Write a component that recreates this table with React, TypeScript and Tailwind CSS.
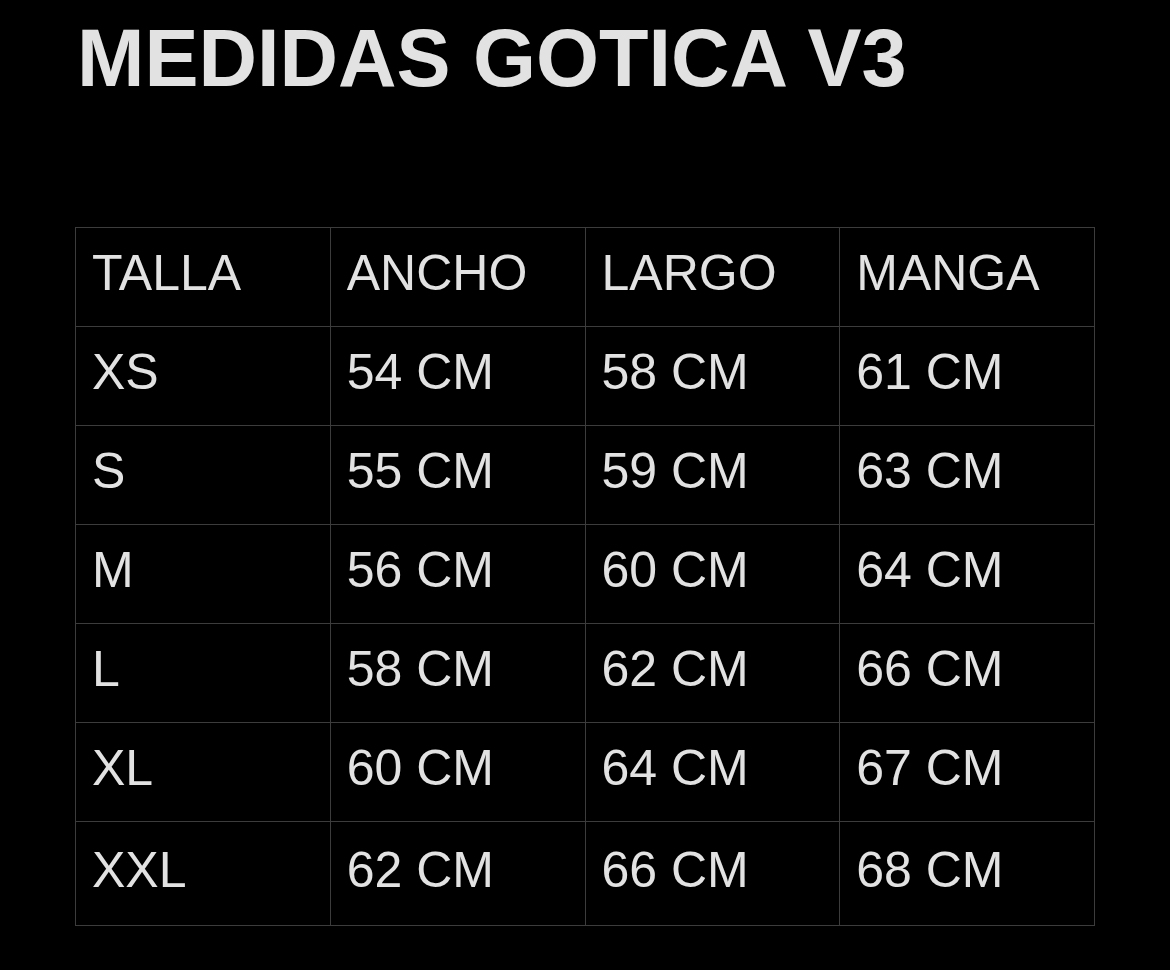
const rows = [
  ["TALLA", "ANCHO", "LARGO", "MANGA"],
  ["XS", "54 CM", "58 CM", "61 CM"],
  ["S", "55 CM", "59 CM", "63 CM"],
  ["M", "56 CM", "60 CM", "64 CM"],
  ["L", "58 CM", "62 CM", "66 CM"],
  ["XL", "60 CM", "64 CM", "67 CM"],
  ["XXL", "62 CM", "66 CM", "68 CM"],
];

export default function App() {
  return (
    <div className="min-h-[970px] w-[1170px] bg-black pl-[75px] pt-[14px] font-['Liberation_Sans',Arial,sans-serif] text-[#e2e2e2]">
      <h1 className="pl-[2px] text-[81px] font-bold leading-[88px]">MEDIDAS GOTICA V3</h1>

      <table className="mt-[125px] w-[1020px] table-fixed border-collapse">
        <tbody>
          {rows.map((row, i) => (
            <tr key={i} className={i === rows.length - 1 ? "h-[104px]" : "h-[99px]"}>
              {row.map((cell, j) => (
                <td
                  key={j}
                  className="border border-[#3c3c3c] px-[16px] pb-[8px] align-middle text-[50px] leading-none"
                >
                  {cell}
                </td>
              ))}
            </tr>
          ))}
        </tbody>
      </table>
    </div>
  );
}
